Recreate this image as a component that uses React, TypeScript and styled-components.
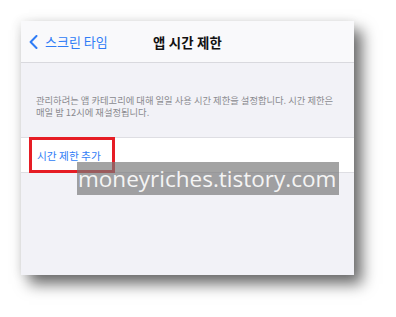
import React from "react";
import styled, { createGlobalStyle } from "styled-components";

const Global = createGlobalStyle`
  html, body { margin: 0; padding: 0; background: #ffffff; }
  body { font-family: "Noto Sans CJK KR", "Noto Sans", sans-serif; }
  * { box-sizing: border-box; }
`;

const Stage = styled.div`
  width: 396px;
  height: 317px;
  padding: 21px 0 0 21px;
  overflow: hidden;
`;

const Panel = styled.div`
  position: relative;
  width: 333px;
  height: 254px;
  background: #f2f2f7;
  display: flex;
  flex-direction: column;
  box-shadow: 8px 9px 14px rgba(0, 0, 0, 0.58), -2px 0 10px rgba(0, 0, 0, 0.08);
`;

const NavBar = styled.div`
  position: relative;
  height: 42px;
  background: #f9f9fb;
  border-bottom: 1px solid #d9d9de;
  display: flex;
  align-items: center;
  justify-content: center;
`;

const Back = styled.div`
  position: absolute;
  left: 8px;
  top: 0;
  bottom: 0;
  display: flex;
  align-items: center;
  gap: 7px;
  color: #2f7cf6;
  font-size: 13px;
`;

const Title = styled.div`
  font-size: 13.4px;
  font-weight: 700;
  color: #111;
  letter-spacing: 0.2px;
`;

const Description = styled.div`
  padding: 32px 12px 0 15px;
  height: 74px;
  font-size: 9.3px;
  line-height: 11.5px;
  color: #8a8a8f;
`;

const Row = styled.div`
  height: 36px;
  background: #ffffff;
  border-top: 1px solid #dedee3;
  border-bottom: 1px solid #dedee3;
  display: flex;
  align-items: center;
  padding-left: 16px;
  color: #2f7cf6;
  font-size: 10.7px;
`;

const Highlight = styled.div`
  position: absolute;
  left: 8px;
  top: 116px;
  width: 86px;
  height: 36px;
  border: 3px solid #e61d25;
`;

const Watermark = styled.div`
  position: absolute;
  left: 56px;
  top: 141px;
  width: 262px;
  height: 33px;
  background: rgba(120, 120, 120, 0.68);
  color: #f4f4f4;
  font-family: "Open Sans", "Noto Sans", sans-serif;
  font-size: 22.5px;
  line-height: 33px;
  padding-left: 1px;
  white-space: nowrap;
`;

export default function App() {
  return (
    <>
      <Global />
      <Stage>
        <Panel>
          <NavBar>
            <Back>
              <svg width="9" height="14" viewBox="0 0 9 14">
                <path d="M7.5 1 L1.6 7 L7.5 13" fill="none" stroke="#2f7cf6" strokeWidth="2" strokeLinecap="round" strokeLinejoin="round" />
              </svg>
              <span>스크린 타임</span>
            </Back>
            <Title>앱 시간 제한</Title>
          </NavBar>
          <Description>
            관리하려는 앱 카테고리에 대해 일일 사용 시간 제한을 설정합니다. 시간 제한은 매일 밤 12시에 재설정됩니다.
          </Description>
          <Row>시간 제한 추가</Row>
          <Highlight />
          <Watermark>moneyriches.tistory.com</Watermark>
        </Panel>
      </Stage>
    </>
  );
}
